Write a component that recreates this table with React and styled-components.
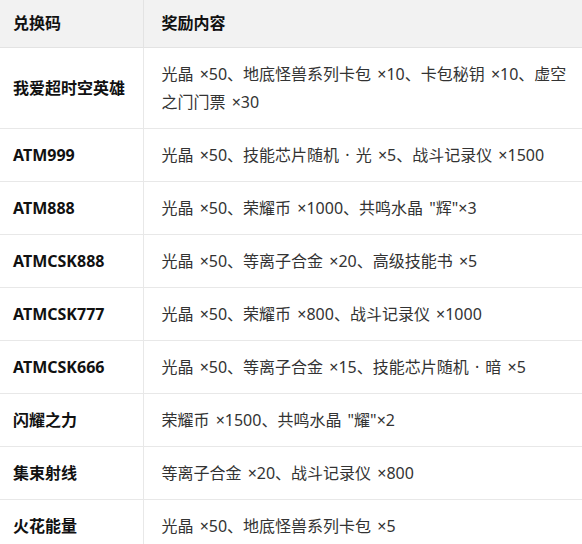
import React from 'react'
import styled, { createGlobalStyle } from 'styled-components'

const rows = [
  ['我爱超时空英雄', '光晶 ×50、地底怪兽系列卡包 ×10、卡包秘钥 ×10、虚空之门门票 ×30'],
  ['ATM999', '光晶 ×50、技能芯片随机 · 光 ×5、战斗记录仪 ×1500'],
  ['ATM888', '光晶 ×50、荣耀币 ×1000、共鸣水晶 "辉"×3'],
  ['ATMCSK888', '光晶 ×50、等离子合金 ×20、高级技能书 ×5'],
  ['ATMCSK777', '光晶 ×50、荣耀币 ×800、战斗记录仪 ×1000'],
  ['ATMCSK666', '光晶 ×50、等离子合金 ×15、技能芯片随机 · 暗 ×5'],
  ['闪耀之力', '荣耀币 ×1500、共鸣水晶 "耀"×2'],
  ['集束射线', '等离子合金 ×20、战斗记录仪 ×800'],
  ['火花能量', '光晶 ×50、地底怪兽系列卡包 ×5'],
]

const GlobalStyle = createGlobalStyle`
  body {
    margin: 0;
    background: #fff;
    font-family: "Noto Sans", "Noto Sans CJK SC", sans-serif;
  }
`

const Wrapper = styled.div`
  width: 582px;
  height: 544px;
  overflow: hidden;
`

const Table = styled.table`
  width: 587px;
  table-layout: fixed;
  border-collapse: collapse;
  font-size: 16px;
  line-height: 28px;
  color: #333;
  word-spacing: 2px;
`

const HeadCell = styled.th`
  text-align: left;
  font-weight: 700;
  color: #111;
  background: #f2f2f2;
  padding: 9px ${p => (p.$first ? '8px' : '18px')} 10px ${p => (p.$first ? '13px' : '18px')};
  border-right: ${p => (p.$first ? '1px solid #e3e3e3' : 'none')};
  border-bottom: 1px solid #e3e3e3;
`

const Cell = styled.td`
  padding: 12px ${p => (p.$first ? '8px' : '18px')} 12px ${p => (p.$first ? '13px' : '18px')};
  font-weight: ${p => (p.$first ? 700 : 400)};
  color: ${p => (p.$first ? '#111' : '#333')};
  border-right: ${p => (p.$first ? '1px solid #e8e8e8' : 'none')};
  border-bottom: 1px solid #e8e8e8;
  vertical-align: middle;
`

const App = () => {
  return (
    <Wrapper>
      <GlobalStyle />
      <Table>
        <colgroup>
          <col style={{ width: 143 }} />
          <col />
        </colgroup>
        <thead>
          <tr>
            <HeadCell $first>兑换码</HeadCell>
            <HeadCell>奖励内容</HeadCell>
          </tr>
        </thead>
        <tbody>
          {rows.map(([code, reward]) => (
            <tr key={code}>
              <Cell $first>{code}</Cell>
              <Cell>{reward}</Cell>
            </tr>
          ))}
        </tbody>
      </Table>
    </Wrapper>
  )
}

export default App
